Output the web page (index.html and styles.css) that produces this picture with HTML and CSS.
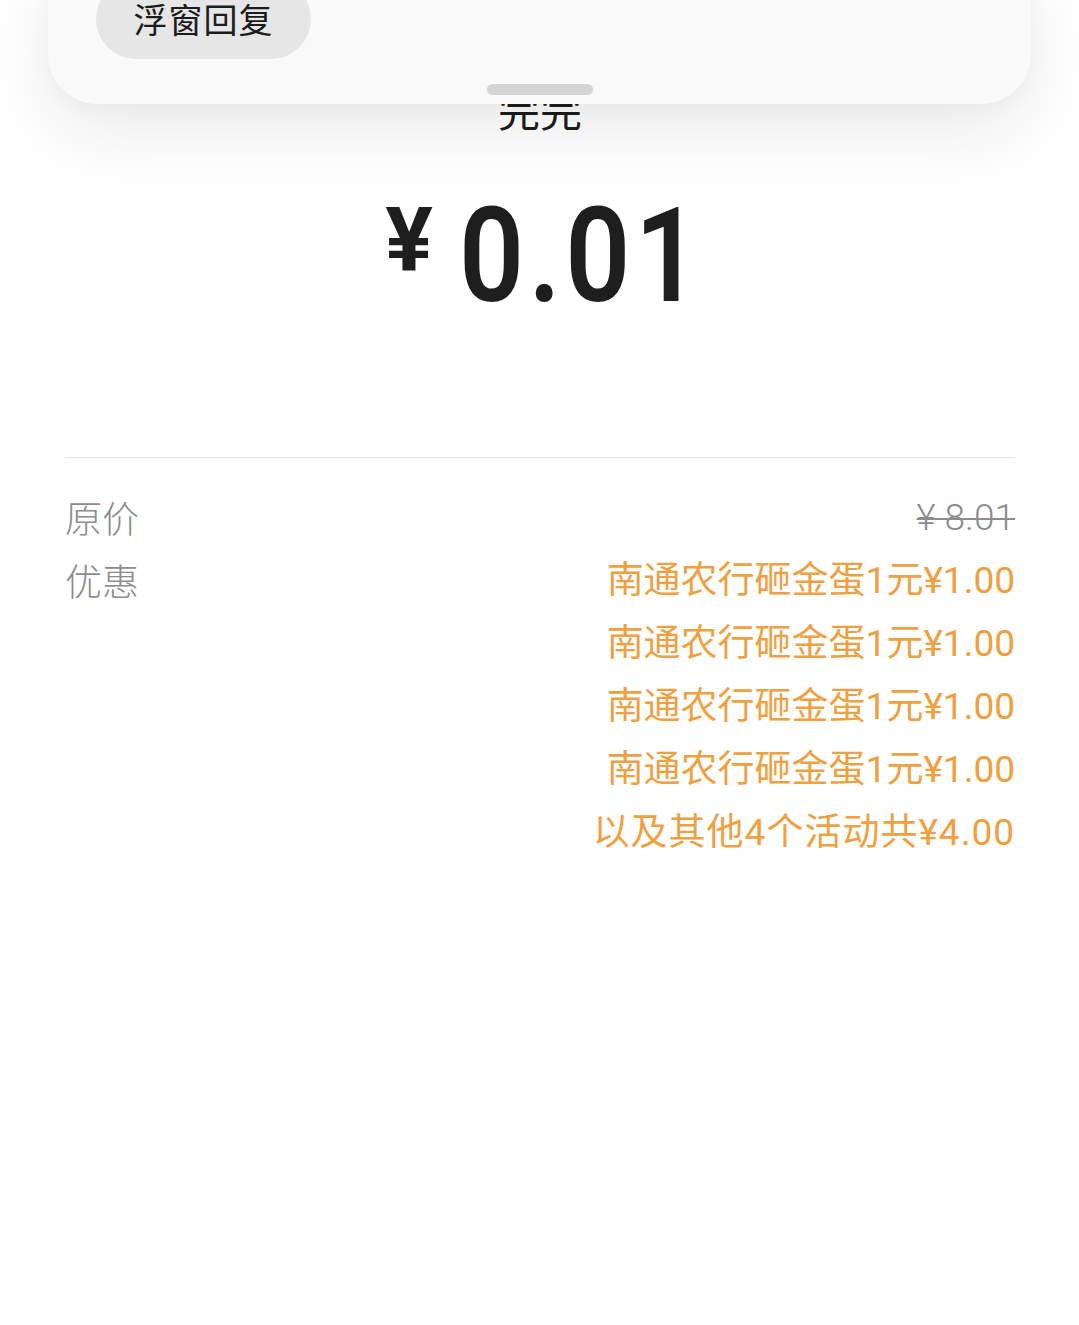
FILE: index.html
```html
<!DOCTYPE html>
<html lang="zh-CN">
<head>
<meta charset="utf-8">
<title>支付详情</title>
<link rel="stylesheet" href="styles.css">
</head>
<body>
<div class="page">
  <div class="sheet">
    <div class="pill">浮窗回复</div>
    <div class="handle"></div>
  </div>

  <main class="content">
    <h1 class="title">完完</h1>
    <div class="price">
      <span class="yen">¥</span>
      <span class="amount">0.01</span>
    </div>
    <hr class="divider">
    <div class="rows">
      <div class="label">原价</div>
      <div class="value original">¥ 8.01</div>
      <div class="label">优惠</div>
      <div class="value discounts">
        <div>南通农行砸金蛋1元¥1.00</div>
        <div>南通农行砸金蛋1元¥1.00</div>
        <div>南通农行砸金蛋1元¥1.00</div>
        <div>南通农行砸金蛋1元¥1.00</div>
        <div>以及其他4个活动共¥4.00</div>
      </div>
    </div>
  </main>
</div>
</body>
</html>
```

FILE: styles.css
```css
* { box-sizing: border-box; }

html, body {
  margin: 0;
  padding: 0;
  background: #ffffff;
}

body {
  font-family: Roboto, "Noto Sans CJK SC", sans-serif;
  color: #1f1f1f;
}

.page {
  position: relative;
  width: 1079px;
  min-height: 1325px;
  overflow: hidden;
}

.sheet {
  position: absolute;
  left: 48px;
  right: 48px;
  top: -60px;
  height: 164px;
  padding: 39px 0 0 48px;
  background: #fafafa;
  border-radius: 50px;
  box-shadow: 0 30px 70px rgba(0, 0, 0, 0.08), 0 6px 20px rgba(0, 0, 0, 0.03);
  z-index: 2;
}

.pill {
  width: 215px;
  height: 80px;
  border-radius: 40px;
  background: #e6e6e6;
  color: #1c1c1c;
  font-family: "Noto Sans CJK SC", sans-serif;
  font-size: 34px;
  line-height: 80px;
  text-align: center;
  letter-spacing: 1px;
}

.handle {
  position: absolute;
  left: 50%;
  bottom: 9px;
  width: 106px;
  height: 11px;
  margin-left: -53px;
  border-radius: 6px;
  background: #d5d5d5;
}

.content {
  padding: 88px 64px 0 65px;
}

.title {
  margin: 0;
  font-family: "Noto Sans CJK SC", sans-serif;
  font-weight: 400;
  font-size: 42px;
  line-height: 42px;
  text-align: center;
  color: #1c1c1c;
}

.price {
  display: flex;
  justify-content: center;
  align-items: flex-start;
  margin-top: 76px;
  height: 130px;
  color: #1e1e1e;
}

.yen {
  font-weight: 700;
  font-size: 89px;
  line-height: 88px;
  margin-top: -10px;
  margin-right: 26px;
}

.amount {
  display: inline-block;
  font-weight: 600;
  font-size: 131px;
  line-height: 100px;
  letter-spacing: 5px;
  transform: scaleX(0.87);
  transform-origin: left center;
  margin-right: -46px;
}

.divider {
  margin: 121px 0 0;
  border: 0;
  border-top: 1.5px solid #e6e6e6;
  height: 0;
}

.rows {
  display: grid;
  grid-template-columns: auto 1fr;
  margin-top: 28px;
  font-size: 37px;
  line-height: 63px;
}

.label {
  color: #8c8c8c;
  font-family: "Noto Sans CJK SC", sans-serif;
  font-weight: 300;
}

.value {
  text-align: right;
}

.original {
  color: #8c8c8c;
  font-weight: 300;
  text-decoration: line-through;
  text-decoration-thickness: 2px;
}

.discounts {
  color: #f0a040;
}

.discounts div:last-child {
  letter-spacing: 1px;
}
```
